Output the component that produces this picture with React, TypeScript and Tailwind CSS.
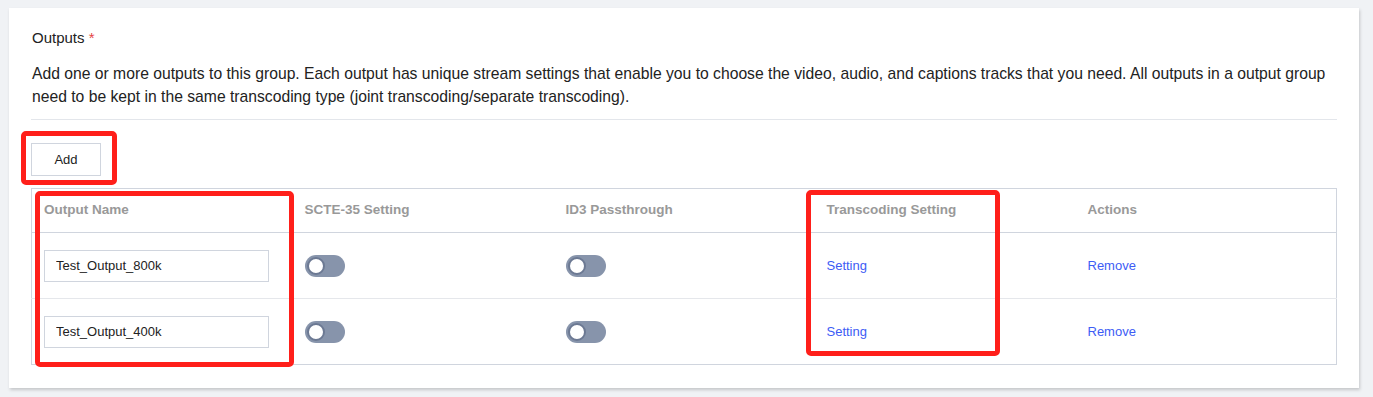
import React, { useState } from 'react';

type Row = { id: number; name: string; scte: boolean; id3: boolean };

const Toggle: React.FC<{ on: boolean; onClick: () => void }> = ({ on, onClick }) => (
  <button
    type="button"
    onClick={onClick}
    className={`relative flex h-[22px] w-[40px] items-center rounded-full px-[2px] ${
      on ? 'justify-end bg-[#3b5bf5]' : 'justify-start bg-[#8794ab]'
    }`}
  >
    <span className="block h-[18px] w-[18px] rounded-full border-2 border-[#6c7993] bg-white" />
  </button>
);

const App: React.FC = () => {
  const [rows, setRows] = useState<Row[]>([
    { id: 1, name: 'Test_Output_800k', scte: false, id3: false },
    { id: 2, name: 'Test_Output_400k', scte: false, id3: false },
  ]);

  const flip = (id: number, key: 'scte' | 'id3') => {
    setRows(rows.map((r) => (r.id === id ? { ...r, [key]: !r[key] } : r)));
  };

  return (
    <div className="relative h-[397px] w-full overflow-hidden bg-[#f0f2f5] pl-[9px] pr-[14px] pt-[8px] font-['Liberation_Sans',Arial,sans-serif]">
      {/* card */}
      <div className="h-[380px] w-[1350px] bg-white px-[22px] pt-[20px] shadow-[1px_2px_3px_rgba(0,0,0,0.18)]">
        <div className="pl-[1px] text-[15px] leading-[20px] text-[#222]">
          Outputs <span className="text-[#e54545]">*</span>
        </div>
        <p className="mt-[14px] pl-[1px] text-[15.7px] leading-[23px] text-[#222]">
          Add one or more outputs to this group. Each output has unique stream settings that enable you to choose the video, audio, and captions tracks that you need. All outputs in a output group need to be kept in the same transcoding type (joint transcoding/separate transcoding).
        </p>
        <div className="mt-[11px] h-px bg-[#e3e6eb]" />

        <button
          type="button"
          className="mt-[23px] h-[33px] w-[70px] border border-[#d0d5de] bg-white text-[13px] text-[#222]"
        >
          Add
        </button>

        {/* table */}
        <table className="mt-[12px] w-full table-fixed border border-[#d0d5de] text-left text-[13px]">
          <thead>
            <tr className="h-[44px] border-b border-[#d0d5de]">
              <th className="pl-[12px] text-[13.5px] font-bold text-[#999]">Output Name</th>
              <th className="pl-[12px] text-[13.5px] font-bold text-[#999]">SCTE-35 Setting</th>
              <th className="pl-[12px] text-[13.5px] font-bold text-[#999]">ID3 Passthrough</th>
              <th className="pl-[12px] text-[13.5px] font-bold text-[#999]">Transcoding Setting</th>
              <th className="pl-[12px] text-[13.5px] font-bold text-[#999]">Actions</th>
            </tr>
          </thead>
          <tbody>
            {rows.map((r, i) => (
              <tr key={r.id} className={`h-[66px] ${i === 0 ? 'border-b border-[#e5e7eb]' : ''}`}>
                <td className="pl-[12px]">
                  <input
                    value={r.name}
                    onChange={(e) =>
                      setRows(rows.map((x) => (x.id === r.id ? { ...x, name: e.target.value } : x)))
                    }
                    className="h-[32px] w-[225px] border border-[#d0d5de] px-[11px] text-[13px] text-[#222] outline-none"
                  />
                </td>
                <td className="pl-[12px]">
                  <Toggle on={r.scte} onClick={() => flip(r.id, 'scte')} />
                </td>
                <td className="pl-[12px]">
                  <Toggle on={r.id3} onClick={() => flip(r.id, 'id3')} />
                </td>
                <td className="pl-[12px]">
                  <a href="#" className="text-[13px] text-[#3d5cf5]">Setting</a>
                </td>
                <td className="pl-[12px]">
                  <a href="#" className="text-[13px] text-[#3d5cf5]">Remove</a>
                </td>
              </tr>
            ))}
          </tbody>
        </table>
      </div>

      {/* red annotation boxes */}
      <div className="pointer-events-none absolute left-[21px] top-[131px] h-[54px] w-[96px] rounded-[5px] border-[5px] border-[#ff1f1a]" />
      <div className="pointer-events-none absolute left-[35px] top-[191px] h-[176px] w-[259px] rounded-[5px] border-[5px] border-[#ff1f1a]" />
      <div className="pointer-events-none absolute left-[806px] top-[190px] h-[166px] w-[194px] rounded-[5px] border-[5px] border-[#ff1f1a]" />
    </div>
  );
};

export default App;
